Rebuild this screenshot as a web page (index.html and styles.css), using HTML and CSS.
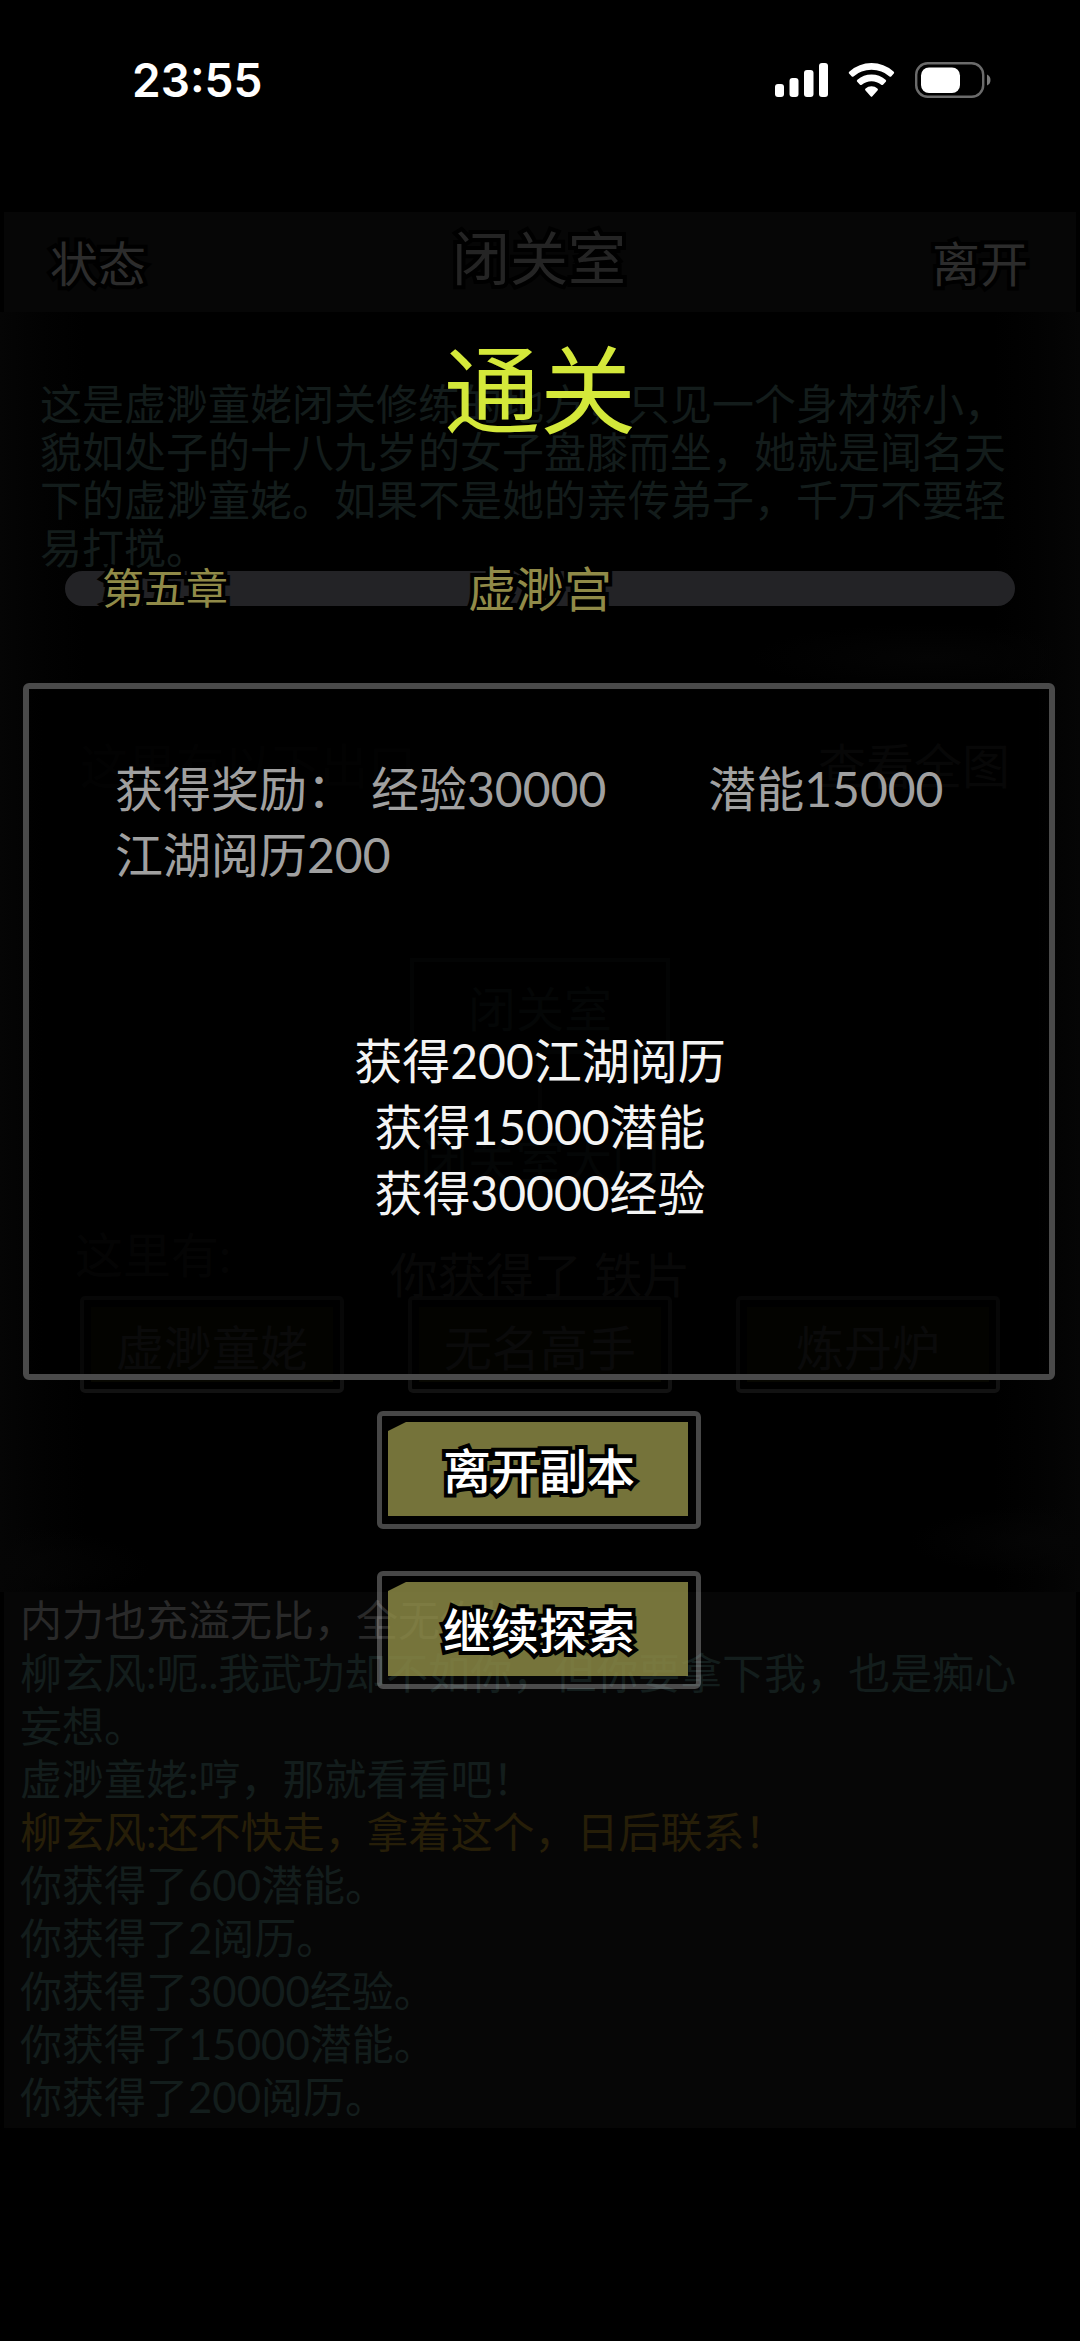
FILE: index.html
```
<!DOCTYPE html>
<html lang="zh-CN">
<head>
<meta charset="utf-8">
<meta name="viewport" content="width=device-width, initial-scale=1">
<title>通关</title>
<link rel="stylesheet" href="styles.css">
</head>
<body>
<div class="screen">
  <div class="status-bar">
    <time class="clock">23:55</time>
    <svg class="status-icons" viewBox="0 0 216 36" width="216" height="36" aria-hidden="true">
      <g fill="#fff">
        <rect x="0" y="22" width="9" height="13" rx="3"/>
        <rect x="14.500" y="16" width="9" height="19" rx="3"/>
        <rect x="29" y="8" width="9.500" height="27" rx="3"/>
        <rect x="44" y="1" width="9" height="34" rx="3"/>
        <path d="M73.800 11.200Q73.500 10.400 74.500 9.500Q84 1 96.500 1T118.500 9.500Q119.500 10.400 119 11.200L116.200 14.500Q115.400 15.200 114.500 14.400Q107 7.800 96.500 7.800T78.500 14.400Q77.600 15.200 76.800 14.500Z"/>
        <path d="M82 19.500Q81.400 18.600 82.400 17.700Q88.500 12.500 96.500 12.500T110.600 17.700Q111.600 18.600 111 19.500L108 22.700Q107.200 23.500 106.200 22.700Q102 19.200 96.500 19.200T86.800 22.700Q85.800 23.500 85 22.700Z"/>
        <path d="M90.300 28.300Q89.600 27.300 90.600 26.500Q93 24.300 96.500 24.300T102.400 26.500Q103.400 27.300 102.700 28.300L97.400 34.300Q96.500 35.300 95.600 34.300Z"/>
        <rect x="146" y="5.500" width="39" height="25.500" rx="8"/>
      </g>
      <rect x="141.200" y="1.200" width="67" height="33.600" rx="11.500" fill="none" stroke="#6b6b6b" stroke-width="2.400"/>
      <path d="M212 12.500Q215.500 14 215.500 18T212 23.500Z" fill="#7a7a7a"/>
    </svg>
  </div>

  <main class="game">
    <header class="room-header">
      <button class="nav-button" type="button">状态</button>
      <h1 class="room-name">闭关室</h1>
      <button class="nav-button" type="button">离开</button>
    </header>

    <section class="room">
      <p class="room-description">这是虚渺童姥闭关修练的地方，只见一个身材娇小，貌如处子的十八九岁的女子盘膝而坐，她就是闻名天下的虚渺童姥。如果不是她的亲传弟子，千万不要轻易打搅。</p>
      <div class="exits-head">
        <span>这里有以下出口</span>
        <button class="map-button" type="button">查看全图</button>
      </div>
      <div class="map">
        <button class="map-node" type="button">闭关室</button>
        <span class="map-link"></span>
        <button class="map-node map-node-faint" type="button">闭关室大门</button>
      </div>
      <div class="people-head">
        <span>这里有:</span>
        <span class="toast">你获得了 铁片</span>
      </div>
      <div class="people">
        <button class="person" type="button">虚渺童姥</button>
        <button class="person" type="button">无名高手</button>
        <button class="person" type="button">炼丹炉</button>
      </div>
    </section>

    <section class="log">
      <p class="log-plain">内力也充溢无比，全无伤样</p>
      <p>柳玄风:呃..我武功却不如你，但你要拿下我，也是痴心妄想。</p>
      <p>虚渺童姥:哼，那就看看吧！</p>
      <p class="log-quest">柳玄风:还不快走，拿着这个，日后联系！</p>
      <p>你获得了600潜能。</p>
      <p>你获得了2阅历。</p>
      <p>你获得了30000经验。</p>
      <p>你获得了15000潜能。</p>
      <p>你获得了200阅历。</p>
    </section>
  </main>

  <div class="overlay" role="dialog" aria-labelledby="clear-title">
    <h2 class="clear-title" id="clear-title">通关</h2>
    <div class="chapter">
      <span class="chapter-number">第五章</span>
      <span class="chapter-name">虚渺宫</span>
    </div>
    <section class="panel">
      <p class="rewards">
        <span class="rewards-label">获得奖励：</span>
        <span class="reward">经验30000</span>
        <span class="reward reward-spaced">潜能15000</span>
        <span class="reward">江湖阅历200</span>
      </p>
      <ul class="gains">
        <li>获得200江湖阅历</li>
        <li>获得15000潜能</li>
        <li>获得30000经验</li>
      </ul>
    </section>
    <div class="actions">
      <button class="action" type="button">离开副本</button>
      <button class="action" type="button">继续探索</button>
    </div>
  </div>
</div>
</body>
</html>
```

FILE: styles.css
```
* {
  box-sizing: border-box;
}

body {
  margin: 0;
  background: #000;
  color: #fff;
  font-family: Lato, "Noto Sans CJK SC", sans-serif;
  font-size: 48px;
}

h1,
h2,
p,
ul {
  margin: 0;
  padding: 0;
  font-weight: 400;
  list-style: none;
}

button {
  margin: 0;
  padding: 0;
  border: 0;
  background: none;
  color: inherit;
  font: inherit;
}

.screen {
  position: relative;
  min-height: 100vh;
}

/* Phone status bar */
.status-bar {
  display: flex;
  justify-content: space-between;
  align-items: flex-start;
  height: 212px;
  padding: 62px 89px 0 132px;
}

.clock {
  font-family: Inter, sans-serif;
  font-size: 46px;
  font-weight: 600;
  line-height: 36px;
}

/* Room behind the dialog */
.room-header {
  display: flex;
  justify-content: space-between;
  align-items: center;
  height: 100px;
  margin: 0 4px;
  padding: 0 48px 2px 46px;
  background: #060606;
  color: #2c2c2c;
}

.nav-button,
.room-name,
.chapter span,
.action {
  -webkit-text-stroke: 8px #000;
  paint-order: stroke fill;
}

.room-name {
  padding-bottom: 12px;
  font-family: KaiTi, STKaiti, "Noto Sans CJK SC", sans-serif;
  font-size: 58px;
  line-height: 64px;
  color: #242424;
}

.room {
  padding: 68px 40px 199px;
  background:
    radial-gradient(ellipse 180px 34px at 86% 27%, #040404, transparent),
    radial-gradient(ellipse 150px 36px at 98% 96%, #050505, transparent),
    radial-gradient(ellipse 150px 40px at 0 98%, #050505, transparent),
    linear-gradient(90deg, #050505 0, #020202 4%, #000 8%, #000 92%, #020202 96%, #050505);
}

.room-description {
  font-size: 42px;
  line-height: 48px;
  color: #131c1b;
}

.exits-head {
  display: flex;
  justify-content: space-between;
  margin-top: 162px;
  padding: 0 30px 0 40px;
  line-height: 64px;
  color: #070707;
}

.map-button {
  color: #121212;
}

.map {
  display: flex;
  flex-direction: column;
  align-items: center;
  margin-top: 160px;
}

.map-node {
  width: 260px;
  height: 96px;
  border: 4px solid #080c0c;
  color: #0b0f0f;
}

.map-node-faint {
  border-color: #020202;
}

.map-link {
  width: 4px;
  height: 56px;
  background: #080808;
}

.people-head {
  position: relative;
  margin-top: 17px;
  padding-left: 35px;
  line-height: 64px;
  color: #0c0c0c;
}

.toast {
  position: absolute;
  top: 20px;
  left: 0;
  right: 0;
  text-align: center;
  color: #161616;
}

.people {
  display: flex;
  justify-content: space-between;
  margin-top: 9px;
  padding: 0 40px;
}

.person {
  width: 264px;
  height: 97px;
  border: 4px solid #121212;
  border-radius: 5px;
  background: #080802;
  background-clip: content-box;
  padding: 7px;
  color: #1a1a1a;
}

.log {
  margin: 0 4px;
  padding: 2px 24px 4px 16px;
  background: #060606;
  font-size: 42px;
  line-height: 53px;
  color: #131d1c;
}

.log-plain {
  color: #292929;
}

.log-quest {
  color: #261e08;
}

/* Stage-clear dialog */
.overlay {
  position: absolute;
  inset: 0;
  padding-top: 329px;
}

.clear-title {
  font-family: KaiTi, STKaiti, "Noto Sans CJK SC", sans-serif;
  font-size: 96px;
  line-height: 112px;
  text-align: center;
  color: #d4e83a;
}

.chapter {
  display: grid;
  grid-template-columns: 1fr auto 1fr;
  align-items: center;
  height: 35px;
  margin: 130px 65px 0;
  padding: 0 37px;
  border-radius: 18px;
  background: #232326;
  color: #908a48;
  line-height: 35px;
}

.chapter-number {
  font-size: 42px;
}

.panel {
  margin: 77px 25px 0 23px;
  padding: 67px 84px 148px 86px;
  border: 6px solid #4a4a4a;
  border-radius: 6px;
  background: rgba(0, 0, 0, 0.6);
  line-height: 66px;
}

.rewards {
  display: flex;
  flex-wrap: wrap;
  color: #a0a0a0;
}

.rewards-label {
  margin-right: 16px;
}

.reward-spaced {
  margin-left: 102px;
}

.gains {
  margin-top: 140px;
  text-align: center;
  color: #f4f4f4;
}

.actions {
  display: flex;
  flex-direction: column;
  align-items: center;
  gap: 42px;
  margin-top: 31px;
  padding-right: 2px;
}

.action {
  position: relative;
  z-index: 0;
  width: 324px;
  height: 118px;
  padding-bottom: 4px;
  border: 5px solid rgba(255, 255, 255, 0.28);
  border-radius: 6px;
  font-weight: 500;
}

/* Olive plate with its top left corner cut */
.action::before {
  content: "";
  position: absolute;
  inset: 6px 8px 8px 6px;
  z-index: -1;
  background: rgba(146, 144, 72, 0.8);
  clip-path: polygon(18px 0, 100% 0, 100% 100%, 0 100%, 0 9px);
}
```
